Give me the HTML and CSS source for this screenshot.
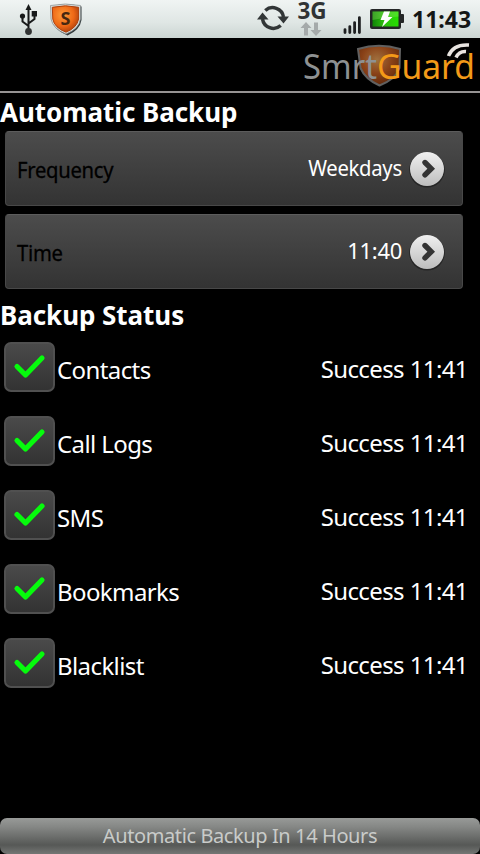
FILE: index.html
```html
<!DOCTYPE html>
<html lang="en">
<head>
<meta charset="utf-8">
<title>SmrtGuard</title>
<link rel="stylesheet" href="styles.css">
</head>
<body>
<svg class="defs" width="0" height="0" aria-hidden="true">
  <defs>
    <linearGradient id="disc" x1="0" y1="0" x2="0" y2="1"><stop offset="0" stop-color="#f0f0f0"/><stop offset="1" stop-color="#bdbdbd"/></linearGradient>
    <radialGradient id="orange" cx=".4" cy=".35" r=".7"><stop offset="0" stop-color="#ff9c38"/><stop offset=".6" stop-color="#ee6816"/><stop offset="1" stop-color="#a83c0c"/></radialGradient>
    <radialGradient id="brown" cx=".45" cy=".35" r=".7"><stop offset="0" stop-color="#a0703e"/><stop offset=".5" stop-color="#8a4218"/><stop offset="1" stop-color="#5c2408"/></radialGradient>
    <linearGradient id="green" x1="0" y1="0" x2="1" y2="0"><stop offset="0" stop-color="#0f8406"/><stop offset=".45" stop-color="#2fc010"/><stop offset="1" stop-color="#25e000"/></linearGradient>
  </defs>
  <symbol id="next" viewBox="0 0 38 38">
    <circle cx="19" cy="19.8" r="17.8" fill="#252525"/>
    <circle cx="19" cy="19" r="17" fill="url(#disc)"/>
    <path d="M17 12.500l6.200 6.200-6.200 6.200" fill="none" stroke="#333" stroke-width="5.400" stroke-linecap="round"/>
  </symbol>
  <symbol id="check" viewBox="0 0 50 50">
    <path d="M13 24.500l8.500 8.500L38 16" fill="none" stroke="#06fb0c" stroke-width="5.200" stroke-linecap="round" stroke-linejoin="round"/>
  </symbol>
</svg>
<header class="status-bar">
  <svg class="usb" width="20" height="34" viewBox="0 0 20 34" fill="none" stroke="#181a1a" stroke-width="2">
    <path d="M10.500 7V29M10.500 25L4.500 20.500V15M10.500 22.500L16.500 18V13"/>
    <path d="M10.500 3l3 6h-6z" fill="#181a1a" stroke="none"/>
    <circle cx="4.500" cy="15" r="2.600" fill="#181a1a" stroke="none"/>
    <path d="M13.700 10h5.300v5.500h-5.300z" fill="#181a1a" stroke="none"/>
    <circle cx="10.500" cy="30.500" r="3.400" fill="#303232" stroke="none"/>
  </svg>
  <svg class="guard" width="34" height="34" viewBox="0 0 34 34">
    <path d="M2.500 4.500Q17 0 32.500 4.500V18Q31 28 18.500 33.500 5 28 3 18z" fill="#30383a"/>
    <path d="M1.500 3.500Q16 .5 31.500 3.500V17Q30 27 17 32 4 27 2 17z" fill="#d8dedd" stroke="#858b8b" stroke-width=".7"/>
    <path d="M3.300 5.300Q16.500 2.300 29.600 5.300V17Q28 25.800 17 30.200 5.400 25.800 3.800 17z" fill="url(#orange)" stroke="#ad410d" stroke-width="1"/>
    <text class="guard-letter" x="16.500" y="22.800" text-anchor="middle">S</text>
  </svg>
  <svg class="sync" width="32" height="28" viewBox="0 0 32 28" fill="none" stroke="#323637" stroke-width="3.500">
    <path d="M8.300 6.500A11 11 0 0 1 26.500 13M23.700 21.500A11 11 0 0 1 5.500 15"/>
    <path d="M20.500 12.500h11.500L26.500 19.500zM0 15.500h11.500L5.500 8.500z" fill="#323637" stroke="none"/>
  </svg>
  <div class="network">
    <span class="network-name">3G</span>
    <svg width="22" height="14" viewBox="0 0 22 14" fill="#a5aaaa">
      <path d="M6 0l5.500 6H8v7.500H4V6H.5zM16 14l-5.500-6H14V.5h4V8h3.500z"/>
    </svg>
  </div>
  <svg class="signal" width="20" height="20" viewBox="0 0 20 20" stroke="#1e2021" stroke-width="2.800" stroke-linecap="round">
    <path d="M2 17.600v-3M6.800 17.600v-6M11.600 17.600v-10M16.400 17.600v-15"/>
  </svg>
  <svg class="battery" width="34" height="21" viewBox="0 0 34 21">
    <rect x="0" y="0" width="31" height="20" rx="2" fill="#242626"/>
    <rect x="30" y="5" width="4" height="9" rx="1" fill="#242626"/>
    <rect x="2.500" y="2.500" width="26" height="15" fill="url(#green)"/>
    <path d="M2.500 2.500h26v5Q15 8 2.500 11z" fill="#a5e878" opacity=".3"/>
    <path d="M14 2.500h6l-2 5.500h4.500L12 18l2.500-7H10.500z" fill="#fff"/>
  </svg>
  <span class="clock">11:43</span>
</header>
<div class="brand">
  <svg width="180" height="52" viewBox="0 0 180 52">
    <path d="M58 11Q79 4.500 100 11L99.500 30Q96 41 79.500 47.500 65 41 60.500 30z" fill="url(#brown)" stroke="#606060" stroke-width="2"/>
    <text class="logo" x="3" y="40.500" fill="#8e9192" textLength="74" lengthAdjust="spacingAndGlyphs">Smrt</text>
    <text class="logo" x="77" y="40.500" fill="#f39a18" textLength="98" lengthAdjust="spacingAndGlyphs">Guard</text>
    <path d="M148.500 18Q153 6 169 7M156 19.500Q159 13 166 13.500" fill="none" stroke="#e8e4e0" stroke-width="3.500"/>
  </svg>
</div>
<main>
  <h2 class="heading heading-auto">Automatic Backup</h2>
  <section class="settings">
    <div class="card"><span class="name">Frequency</span><span class="value">Weekdays</span><svg class="arrow"><use href="#next"/></svg></div>
    <div class="card"><span class="name">Time</span><span class="value time">11:40</span><svg class="arrow"><use href="#next"/></svg></div>
  </section>
  <h2 class="heading heading-status">Backup Status</h2>
  <section class="list">
    <div class="row"><span class="box"><svg><use href="#check"/></svg></span><span class="item">Contacts</span><span class="result">Success 11:41</span></div>
    <div class="row"><span class="box"><svg><use href="#check"/></svg></span><span class="item">Call Logs</span><span class="result">Success 11:41</span></div>
    <div class="row"><span class="box"><svg><use href="#check"/></svg></span><span class="item">SMS</span><span class="result">Success 11:41</span></div>
    <div class="row"><span class="box"><svg><use href="#check"/></svg></span><span class="item">Bookmarks</span><span class="result">Success 11:41</span></div>
    <div class="row"><span class="box"><svg><use href="#check"/></svg></span><span class="item">Blacklist</span><span class="result">Success 11:41</span></div>
  </section>
</main>
<footer class="footer">Automatic Backup In 14 Hours</footer>
</body>
</html>
```
FILE: styles.css
```css
* { box-sizing: border-box; }
body {
  margin: 0;
  width: 480px;
  height: 854px;
  display: flex;
  flex-direction: column;
  overflow: hidden;
  background: #000;
  color: #fff;
  font-family: "Noto Sans", "Open Sans", sans-serif;
  white-space: nowrap;
}
svg { display: block; flex: none; }
.defs { position: absolute; }
.status-bar {
  height: 38px;
  flex: none;
  display: flex;
  align-items: flex-start;
  padding-left: 18px;
  background: linear-gradient(#f0f4f3, #dfe6e4 60%, #cbd5d2);
  color: #141616;
}
.usb { margin-top: 1px; }
.guard { margin: 2px 0 0 11px; }
.guard-letter { font: bold 18px "Noto Sans", sans-serif; fill: #472710; }
.sync { margin: 4px 0 0 174px; }
.network {
  width: 34px;
  margin-left: 6px;
  display: flex;
  flex-direction: column;
  align-items: center;
}
.network-name { font-size: 22.5px; font-weight: bold; line-height: 22px; color: #303334; }
.network svg { margin: 0 0 0 -2px; }
.signal { margin: 15px 0 0 14px; }
.battery { margin: 9px 0 0 7px; }
.clock { margin-left: 8px; font-size: 23px; font-weight: bold; line-height: 39px; }
.brand {
  height: 55px;
  flex: none;
  display: flex;
  justify-content: flex-end;
  border-bottom: 2px solid #969393;
}
.logo { font: 34px "Noto Sans", sans-serif; }
main { flex: 1; }
.heading { margin: 0; font-size: 26px; font-weight: bold; letter-spacing: -.06px; }
.heading-auto { line-height: 38px; }
.heading-status { line-height: 53px; }
.settings { display: grid; gap: 8px; padding: 0 17px 0 5px; }
.card {
  height: 75px;
  display: flex;
  align-items: center;
  padding: 0 16px 0 11px;
  border: 1px solid #484848;
  border-top-color: #5c5c5c;
  border-radius: 4px;
  background: linear-gradient(#4c4c4c, #333);
  font-size: 22px;
}
.name {
  flex: 1;
  color: #000;
  padding-top: 1px;
  letter-spacing: -.3px;
  -webkit-text-stroke: .3px #000;
  transform: scaleX(.92);
  transform-origin: left;
}
.value { letter-spacing: -.3px; transform: scaleX(.92); transform-origin: right; padding-bottom: 3px; }
.time { transform: none; }
.arrow { width: 38px; height: 38px; margin-left: 6px; }
.list { display: grid; gap: 24px; padding: 0 12px 0 4px; }
.row { height: 50px; display: flex; align-items: center; font-size: 24px; letter-spacing: -.6px; }
.box {
  width: 51px;
  height: 50px;
  border: 2px solid #505050;
  border-radius: 7px;
  background: linear-gradient(#4a4a4a, #333);
}
.box svg { width: 50px; height: 50px; margin: -2px; }
.item { flex: 1; padding: 5px 0 0 2px; }
.result { padding-top: 3px; }
.footer {
  height: 36px;
  flex: none;
  border-radius: 7px;
  background: linear-gradient(#989a98, #858785 25%, #565856 75%, #747674);
  color: #c9cbc9;
  font-size: 20px;
  letter-spacing: -.4px;
  line-height: 36px;
  text-align: center;
}
```
